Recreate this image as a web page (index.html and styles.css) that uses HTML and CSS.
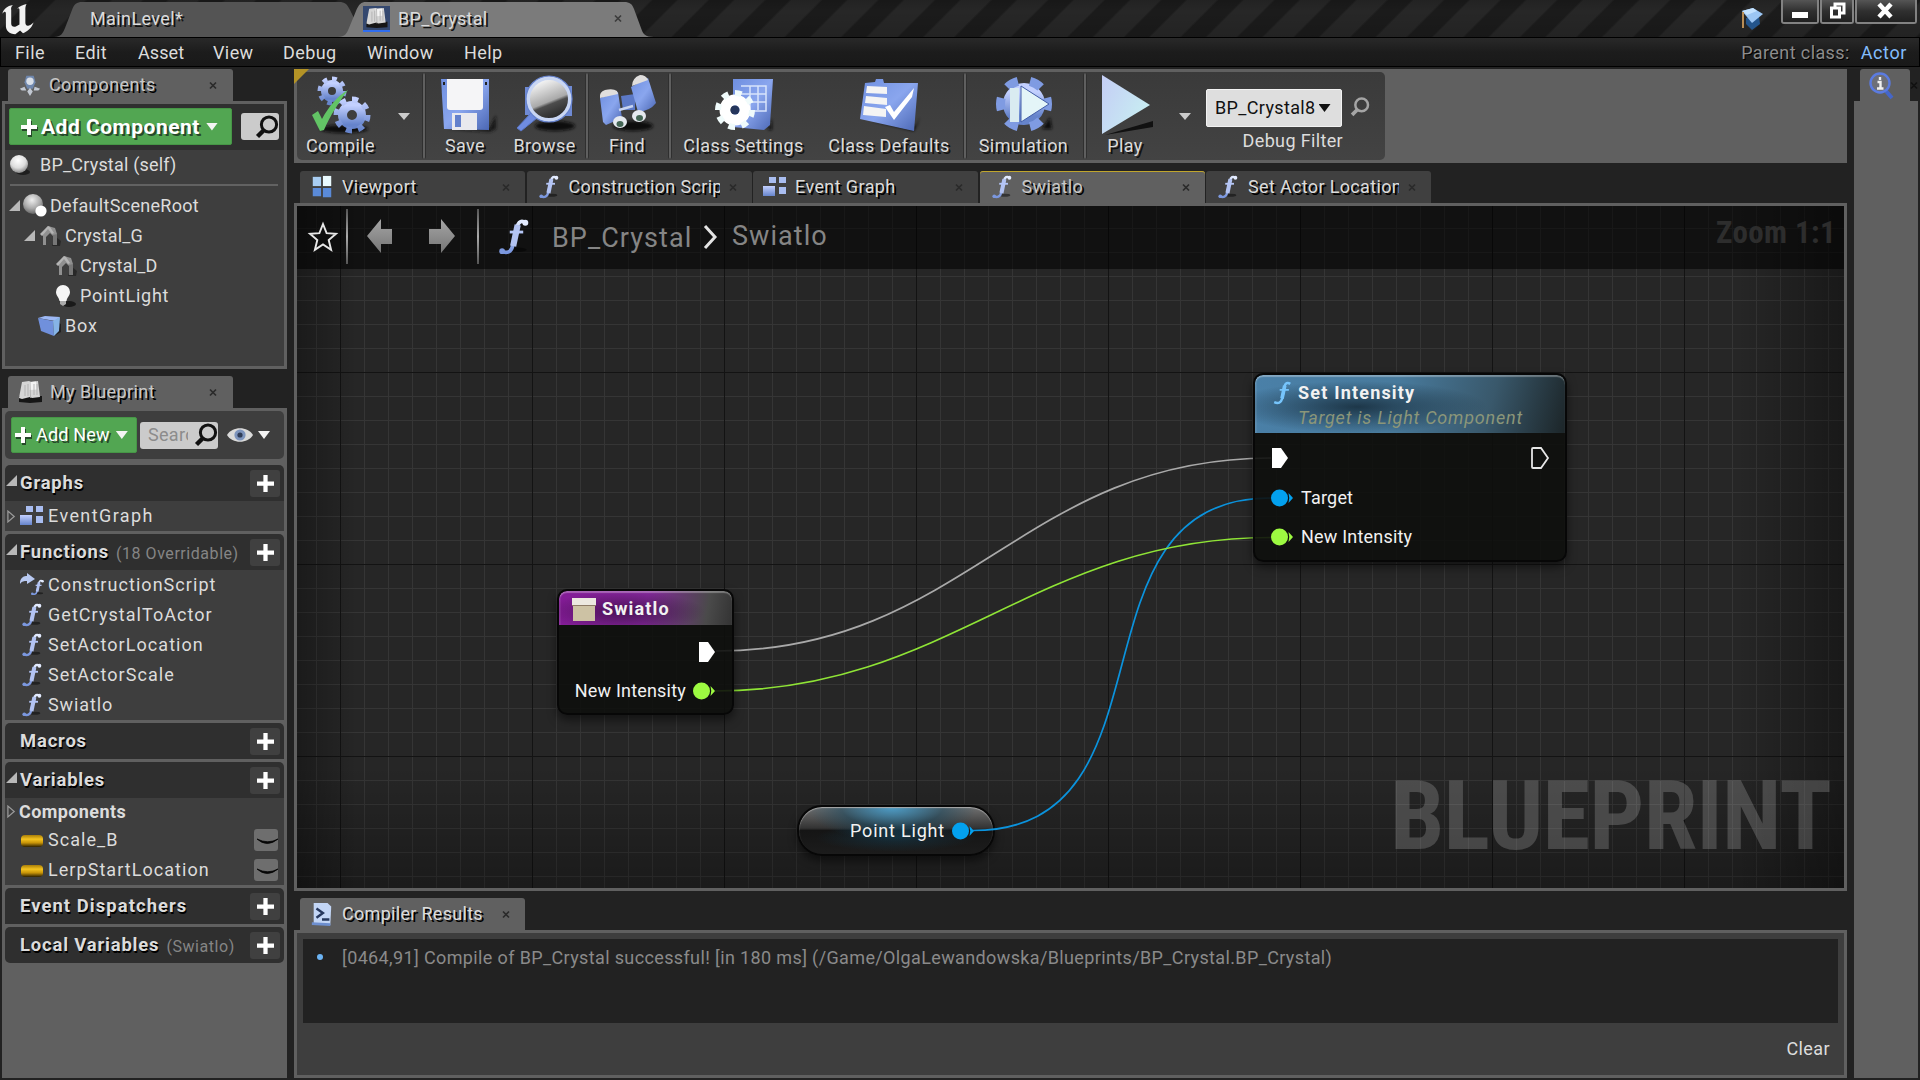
FILE: index.html
```html
<!DOCTYPE html>
<html lang="en">
<head>
<meta charset="utf-8">
<title>BP_Crystal</title>
<link rel="stylesheet" href="styles.css">
</head>
<body>
<svg class="sprite" aria-hidden="true">
  <defs>
    <linearGradient id="blue" x1="0" y1="0" x2="0" y2="1"><stop offset="0" stop-color="#c3d0ff"/><stop offset="1" stop-color="#6684cb"/></linearGradient>
    <linearGradient id="fgrad" x1="0" y1="0" x2="0" y2="1"><stop offset="0" stop-color="#e2ebff"/><stop offset="1" stop-color="#7895df"/></linearGradient>
    <linearGradient id="steel" x1="0" y1="0" x2="1" y2="1"><stop offset="0" stop-color="#6f8fe0"/><stop offset=".5" stop-color="#8aa6ee"/><stop offset="1" stop-color="#4b67b4"/></linearGradient>
    <linearGradient id="playg" x1="0" y1="0" x2="1" y2=".6"><stop offset="0" stop-color="#c4cdf5"/><stop offset="1" stop-color="#c8eef2"/></linearGradient>
    <linearGradient id="gray" x1="0" y1="0" x2="0" y2="1"><stop offset="0" stop-color="#a5a5a5"/><stop offset="1" stop-color="#757575"/></linearGradient>
    <linearGradient id="lens" x1=".3" y1="0" x2=".7" y2="1"><stop offset="0" stop-color="#fff"/><stop offset=".55" stop-color="#a9a9a9"/><stop offset=".62" stop-color="#4d4d4d"/><stop offset="1" stop-color="#222"/></linearGradient>
    <linearGradient id="pill" x1="0" y1="0" x2="0" y2="1"><stop offset="0" stop-color="#a87d08"/><stop offset=".35" stop-color="#f5c41f"/><stop offset=".65" stop-color="#c89408"/><stop offset="1" stop-color="#2c2000"/></linearGradient>
    <radialGradient id="ball" cx=".45" cy=".3" r=".7"><stop offset="0" stop-color="#fff"/><stop offset=".6" stop-color="#ddd"/><stop offset="1" stop-color="#888"/></radialGradient>
    <radialGradient id="ballgray" cx=".45" cy=".3" r=".7"><stop offset="0" stop-color="#eee"/><stop offset=".6" stop-color="#aaa"/><stop offset="1" stop-color="#666"/></radialGradient>
    <filter id="soft" x="-50%" y="-50%" width="200%" height="200%"><feGaussianBlur stdDeviation="1.4"/></filter>
  </defs>
  <symbol id="fn" viewBox="0 0 24 26">
    <ellipse cx="15" cy="22" rx="6" ry="1.6" fill="#000" opacity=".45"/>
    <path d="M20 3C17.500 1 15 2 14 6.500L11 19.500C10.200 23.500 7 25 3 23" fill="none" stroke="url(#fgrad)" stroke-width="2.600"/>
    <path d="M14.600 4.500L11.400 19.500" stroke="#b3c3f2" stroke-width="4.400"/>
    <circle cx="20" cy="3" r="2.100" fill="#e4ecff"/><circle cx="3.600" cy="23" r="2" fill="#7c98de"/>
    <path d="M9 9.500h9.500" stroke="#b5c6f6" stroke-width="2"/>
  </symbol>
  <symbol id="plus" viewBox="0 0 16 16"><path d="M6 0h4v6h6v4h-6v6H6v-6H0V6h6z" fill="#fff"/></symbol>
  <symbol id="search" viewBox="0 0 24 24"><circle cx="14" cy="9.500" r="7.600" fill="none" stroke="currentColor" stroke-width="3"/><path d="M9 15l-6.500 6.500" stroke="currentColor" stroke-width="4.400"/></symbol>
  <symbol id="close" viewBox="0 0 8 8"><path d="M1 1l6 6M7 1L1 7" stroke="currentColor" stroke-width="1.700"/></symbol>
  <symbol id="open" viewBox="0 0 12 12"><path d="M12 0v12H0z" fill="#b8b8b8"/></symbol>
  <symbol id="shut" viewBox="0 0 10 14"><path d="M1 1v12l7-6z" fill="none" stroke="#9a9a9a" stroke-width="1.400"/></symbol>
  <symbol id="grid4" viewBox="0 0 24 26"><path d="M2 2h9v10H2z" fill="#a8cdf2"/><path d="M13 1h9v11h-9z" fill="#eafaff"/><path d="M2 14h9v9H2zM13 14h9v10h-9z" fill="#5a8ad8"/></symbol>
  <symbol id="graph" viewBox="0 0 24 22"><path d="M6 1h7v6H6zM16 1h7v6h-7z" fill="#a9bdf0"/><path d="M0 10h12v10H0z" fill="url(#blue)"/><path d="M16 11h7v7h-7z" fill="#a9bdf0"/></symbol>
  <symbol id="book" viewBox="0 0 24 24">
    <path d="M1 22l11 1 12-1v-6H1z" fill="#161616"/>
    <path d="M4 2l7-1 2 1 7-1 2 16-8 1-2-1-8 2-3-1z" fill="#d6d6d6"/>
    <path d="M11 2l7-.500.500 8-7 .500z" fill="#f4f4f4"/>
    <path d="M12 2l.500 16M7 5v11M10 4v12M16 4v11M19 4v11" stroke="#aaa" fill="none" stroke-width=".8"/>
  </symbol>
  <symbol id="house" viewBox="0 0 22 22">
    <path d="M13 21h8l1-5-5-4z" fill="#1a1a1a" opacity=".6"/>
    <path d="M2 9L9 1l7 2 2 6v11h-4V11l-3-3-4 4v8H4V11z" fill="#909090"/>
    <path d="M1 9l8-8 2 1 4 6-2 1-4-5-6 7z" fill="#b4b4b4"/><path d="M14 10l4-1v11h-4z" fill="#777"/>
  </symbol>
</svg>

<header class="titlebar">
  <svg class="logo" viewBox="0 0 36 36"><path d="M2 14C3 9 6 6 11 5c-2 2-1.500 4-1.500 5v14c0 3 2 4 4 3l3-2V10c0-2-1-2-2-1 2-3 5-4 8-5-1 2-1 4-1 6v13c0 2 1 4 3 3 1 0 2-1 4-3-2 6-5 9-9 11l-2.500-3-4 4C8 35 4.500 31 5 25V14c0-2-1-3-3 0z" transform="translate(0 -1) scale(1.180 .980)" fill="#f2f2f2"/></svg>
  <div class="wintab wintab-main">
    <svg class="wintab-shape" viewBox="0 0 302 35" preserveAspectRatio="none"><path d="M0 35c7 0 9-4 11-9l7-18c2-6 5-8 10-8h257c6 0 8 2 11 8l6 12-10 15z" fill="#545454"/></svg>
    <span>MainLevel*</span>
  </div>
  <div class="wintab wintab-active">
    <svg class="wintab-shape" viewBox="0 0 316 35" preserveAspectRatio="none"><path d="M0 35c7 0 9-4 11-9l7-17c3-7 5-9 10-9h258c6 0 8 2 10 7l7 19c2 6 4 9 13 9z" fill="#7b7b7b"/></svg>
    <i class="book-box"><svg width="23" height="22"><use href="#book"/></svg></i>
    <span>BP_Crystal</span>
    <svg class="x"><use href="#close"/></svg>
  </div>
  <div class="winctl">
    <svg class="cap" viewBox="0 0 26 24"><path d="M7 11l13-2 1 8-8 6-6-6z" fill="#24558c"/><path d="M3 4L14 1l10 6-11 9z" fill="#9cc6f4"/><path d="M3 4L14 1l4 3-10 4z" fill="#c4e2ff"/><path d="M4 5v16" stroke="#b98d55" stroke-width="2"/></svg>
    <div class="winbtns">
      <b class="wb wb1"><svg width="16" height="20"><path d="M0 12h16v6H0z" fill="#fff"/></svg></b>
      <b class="wb wb2"><svg width="17" height="18"><path d="M6 5V2h9v9h-3M2.500 6h8v9h-8z" fill="none" stroke="#fff" stroke-width="3"/></svg></b>
      <b class="wb wb3"><svg width="16" height="16"><path d="M2 1l12 13M14 1L2 14" stroke="#fff" stroke-width="4.500"/></svg></b>
    </div>
  </div>
</header>

<nav class="menubar">
  <span class="m1">File</span><span class="m2">Edit</span><span class="m3">Asset</span><span class="m4">View</span><span class="m5">Debug</span><span class="m6">Window</span><span>Help</span>
  <span class="parent">Parent class:</span><span class="actor">Actor</span>
</nav>

<main class="work">
  <aside class="left">
    <div class="tab side-tab">
      <svg class="ic24" viewBox="0 0 24 26"><path d="M8 3h8l2 7-3 7H9L6 10z" fill="#6f87ad"/><circle cx="12" cy="9" r="4" fill="#d9dfe8"/><path d="M1 17l5-2 2 4H3zM17 15l6 2-2 2h-5zM9 20l3-4 3 4-3 5z" fill="#c2c8d2"/></svg>
      <span>Components</span><svg class="x"><use href="#close"/></svg>
    </div>
    <section class="panel components">
      <div class="addrow">
        <div class="green add-component"><svg width="16" height="16"><use href="#plus"/></svg><b>Add Component</b><i class="tri"></i></div>
        <div class="field"><svg width="24" height="24"><use href="#search"/></svg></div>
      </div>
      <div class="self"><svg width="22" height="22" viewBox="0 0 22 22"><ellipse cx="14" cy="18" rx="7" ry="3" fill="#111" opacity=".7"/><circle cx="10" cy="10" r="9" fill="url(#ball)"/></svg><span>BP_Crystal (self)</span></div>
      <hr>
      <div class="tree t0"><svg class="op"><use href="#open"/></svg><svg width="26" height="24" viewBox="0 0 26 24"><circle cx="11" cy="10" r="10" fill="url(#ballgray)"/><circle cx="19" cy="17" r="5.600" fill="#fff"/></svg><span>DefaultSceneRoot</span></div>
      <div class="tree t1"><svg class="op"><use href="#open"/></svg><svg width="22" height="22"><use href="#house"/></svg><span>Crystal_G</span></div>
      <div class="tree t2"><svg width="22" height="22"><use href="#house"/></svg><span>Crystal_D</span></div>
      <div class="tree t2"><svg width="22" height="24" viewBox="0 0 22 24"><ellipse cx="14" cy="20" rx="7" ry="3" fill="#1a1a1a"/><path d="M1 8a7 7 0 0 1 14 0c0 4-3 5-3.500 9h-7C4 13 1 12 1 8z" fill="#f6f6f6"/><path d="M5 17h6v3l-3 2-3-2z" fill="#aaa"/></svg><span>PointLight</span></div>
      <div class="tree t3"><svg width="24" height="24" viewBox="0 0 24 24"><path d="M16 22l7-4v-8l-4-2z" fill="#1a1a1a" opacity=".8"/><path d="M0 4l7-2 15 1-5 4z" fill="#9db8f5"/><path d="M0 4l15 3 1 15-13-5z" fill="#7090dc"/><path d="M15 7l7-4-1 14-5 5z" fill="#86b4e6"/></svg><span>Box</span></div>
    </section>

    <div class="tab side-tab second">
      <svg class="ic24"><use href="#book"/></svg>
      <span>My Blueprint</span><svg class="x"><use href="#close"/></svg>
    </div>
    <section class="panel blueprint">
      <div class="bp-tools">
        <div class="green add-new"><svg width="16" height="16"><use href="#plus"/></svg><span>Add New</span><i class="tri"></i></div>
        <div class="field wide"><span>Search</span><svg width="24" height="24"><use href="#search"/></svg></div>
        <svg class="eye" viewBox="0 0 26 16"><path d="M0 8C5-1 21-1 26 8c-5 9-21 9-26 0z" fill="#dadada"/><circle cx="13" cy="8" r="5.600" fill="#7d94bd"/><circle cx="13" cy="8" r="2.600" fill="#2f3c57"/></svg>
        <i class="tri"></i>
      </div>
      <div class="cat first"><svg class="op"><use href="#open"/></svg><b>Graphs</b><i class="plusbtn"><svg width="17" height="17"><use href="#plus"/></svg></i></div>
      <div class="item"><svg class="sh"><use href="#shut"/></svg><svg class="gi"><use href="#graph"/></svg><span class="s14">EventGraph</span></div>
      <div class="cat"><svg class="op"><use href="#open"/></svg><b>Functions</b><small>(18 Overridable)</small><i class="plusbtn"><svg width="17" height="17"><use href="#plus"/></svg></i></div>
      <div class="item"><svg class="sh"></svg><svg class="gi" viewBox="0 0 24 24"><path d="M0 9c1-5 4-6 7-6V0l8 6-8 5V8C4 8 2 8 0 11z" fill="#b9caf2"/><use href="#fn" x="10" y="5" width="15" height="19"/></svg><span>ConstructionScript</span></div>
      <div class="item"><svg class="sh"></svg><svg class="gi"><use href="#fn"/></svg><span>GetCrystalToActor</span></div>
      <div class="item"><svg class="sh"></svg><svg class="gi"><use href="#fn"/></svg><span>SetActorLocation</span></div>
      <div class="item"><svg class="sh"></svg><svg class="gi"><use href="#fn"/></svg><span>SetActorScale</span></div>
      <div class="item"><svg class="sh"></svg><svg class="gi"><use href="#fn"/></svg><span class="s08">Swiatlo</span></div>
      <div class="cat"><svg class="op"></svg><b>Macros</b><i class="plusbtn"><svg width="17" height="17"><use href="#plus"/></svg></i></div>
      <div class="cat"><svg class="op"><use href="#open"/></svg><b>Variables</b><i class="plusbtn"><svg width="17" height="17"><use href="#plus"/></svg></i></div>
      <div class="item sub"><svg class="sh"><use href="#shut"/></svg><b>Components</b></div>
      <div class="item"><svg class="sh"></svg><svg class="gi" viewBox="0 0 24 24"><rect x="1" y="7" width="22" height="12" rx="4" fill="url(#pill)"/></svg><span>Scale_B</span><i class="lid"><svg viewBox="0 0 24 22" width="24" height="22"><path d="M3 10q10 9 21 0-10 5.500-21 0z" fill="#050505" stroke="#050505" stroke-width=".8"/></svg></i></div>
      <div class="item"><svg class="sh"></svg><svg class="gi" viewBox="0 0 24 24"><rect x="1" y="7" width="22" height="12" rx="4" fill="url(#pill)"/></svg><span>LerpStartLocation</span><i class="lid"><svg viewBox="0 0 24 22" width="24" height="22"><path d="M3 10q10 9 21 0-10 5.500-21 0z" fill="#050505" stroke="#050505" stroke-width=".8"/></svg></i></div>
      <div class="cat"><svg class="op"></svg><b class="disp">Event Dispatchers</b><i class="plusbtn"><svg width="17" height="17"><use href="#plus"/></svg></i></div>
      <div class="cat last"><svg class="op"></svg><b>Local Variables</b><small>(Swiatlo)</small><i class="plusbtn"><svg width="17" height="17"><use href="#plus"/></svg></i></div>
    </section>
  </aside>

  <section class="center">
    <div class="toolbar">
      <i class="corner"></i>
      <div class="tools">
        <div class="tool w87"><svg class="ti" viewBox="0 0 60 60">
          <ellipse cx="34" cy="55" rx="24" ry="4" fill="#111" filter="url(#soft)"/>
          <g fill="none" stroke="url(#blue)"><circle cx="22" cy="17" r="7.500" stroke-width="7"/><circle cx="22" cy="17" r="12" stroke-width="5" pathLength="16" stroke-dasharray="1 1"/><circle cx="42" cy="41" r="9.500" stroke-width="9"/><circle cx="42" cy="41" r="15.500" stroke-width="6" pathLength="16" stroke-dasharray="1 1"/></g>
          <path d="M2 41l6-4 4 8C18 34 27 22 38 16 29 28 20 42 14 56l-4 1z" fill="#62c465"/></svg><span>Compile</span></div>
        <i class="drop"></i>
        <i class="sep s1"></i>
        <div class="tool w78"><svg class="ti" viewBox="0 0 60 60">
          <path d="M12 55h42l7-14v14l-6 3z" fill="#161616" filter="url(#soft)"/><path d="M6 5h48v51l-45-1z" fill="url(#steel)"/><path d="M12 5h36v28q0 3-3 3H15q-3 0-3-3z" fill="#f5f5f7"/><path d="M17 39h25v17H17z" fill="#e9e9ee"/><path d="M20 41h6v12h-6z" fill="#6380cc"/><path d="M8 8h2v3H8zM50 8h2v3h-2z" fill="#222"/></svg><span>Save</span></div>
        <div class="tool w81"><svg class="ti" viewBox="0 0 60 60">
          <ellipse cx="40" cy="52" rx="20" ry="5" fill="#111" filter="url(#soft)"/><path d="M10 13h12v28H10zM44 12h13v30H44z" fill="#6f8ad4"/><path d="M16 39L2 54l4 3 16-13z" fill="#6f8ce0" stroke="#5b78c8"/><circle cx="34" cy="25" r="21" fill="url(#lens)" stroke="#c9d6f3" stroke-width="4"/><circle cx="34" cy="25" r="23" fill="none" stroke="#6683cf" stroke-width="1.200"/></svg><span>Browse</span></div>
        <i class="sep s2"></i>
        <div class="tool w76"><svg class="ti" viewBox="0 0 60 60">
          <ellipse cx="36" cy="52" rx="20" ry="5" fill="#111" filter="url(#soft)"/><path d="M24 22l14-2v16H26z" fill="#5c79c6"/><path d="M3 24l18-6 4 26-16 7-3-3z" fill="url(#steel)"/><path d="M34 13l17-9 8 25q-6 8-18 9z" fill="url(#steel)"/><path d="M3 24q-1-6 5-8 8-2 12 1l1 3zM35 12q0-8 8-11 6 0 8 5z" fill="#e0dedd"/><ellipse cx="23" cy="48" rx="7" ry="6" fill="#e5e9ef"/><ellipse cx="23" cy="50" rx="3.500" ry="3" fill="#465"/><ellipse cx="42" cy="42" rx="7" ry="6" fill="#e5e9ef"/><ellipse cx="42.500" cy="44" rx="3.500" ry="3" fill="#465"/><path d="M22 36l14-4" stroke="#c8d4f0" stroke-width="2.500"/></svg><span>Find</span></div>
        <i class="sep s3"></i>
        <div class="tool w143"><svg class="ti" viewBox="0 0 60 60">
          <path d="M18 56h36l4-12v12z" fill="#111" filter="url(#soft)"/><path d="M19 5h40l-3 46-6 5-31-3z" fill="url(#steel)"/><path d="M27 12h25v25H27M27 20h25M27 28h25M36 12v24M44 12v24" fill="none" stroke="#d7e4fb" stroke-width="1.500"/><circle cx="21" cy="36" r="10" fill="none" stroke="#fff" stroke-width="11"/><circle cx="21" cy="36" r="17" fill="none" stroke="#f0fbfb" stroke-width="6" pathLength="16" stroke-dasharray="1 1"/><circle cx="21" cy="36" r="4.500" fill="#25365c"/></svg><span>Class Settings</span></div>
        <div class="tool w148"><svg class="ti" viewBox="0 0 60 60">
          <path d="M10 46l48 6 3-10-6 15z" fill="#111" filter="url(#soft)"/><path d="M6 9l10-1 1-3h7l1 4h34l-4 48L1 45z" fill="url(#steel)"/><path d="M8 12l20 1v7L7 19zM7 22l21 2v7L6 29zM5 32l22 3v8L4 41z" fill="#f4f4f4"/><path d="M26 33l5-2 4 7 20-24-2 9-18 23z" fill="#fff"/></svg><span>Class Defaults</span></div>
        <i class="sep s4"></i>
        <div class="tool w113"><svg class="ti" viewBox="0 0 60 60">
          <path d="M12 55h36l8-12 2 12z" fill="#111" filter="url(#soft)"/><circle cx="30" cy="30" r="12" fill="none" stroke="url(#blue)" stroke-width="18"/><circle cx="30" cy="30" r="23.500" fill="none" stroke="#7f9be2" stroke-width="9" pathLength="12" stroke-dasharray="1 1" transform="rotate(-15 30 30)"/><path d="M16 14h9v34h-9z" fill="#d9ebf1"/><path d="M27 12v36l28-18z" fill="#e4f5f8" stroke="#435da6"/></svg><span>Simulation</span></div>
        <i class="sep s5"></i>
        <div class="tool w76 play"><svg class="ti" viewBox="0 0 60 60"><path d="M7 61l48-14v6z" fill="#111"/><path d="M4 1l48 30L4 60z" fill="url(#playg)"/></svg><span>Play</span></div>
        <i class="drop d2"></i>
        <div class="debug"><div class="select"><span>BP_Crystal8</span><i class="tri"></i></div><span class="dlabel">Debug Filter</span></div>
        <svg class="dsearch"><use href="#search"/></svg>
      </div>
    </div>

    <div class="doctabs">
      <div class="tab"><svg class="ic24"><use href="#grid4"/></svg><span>Viewport</span><svg class="x"><use href="#close"/></svg></div>
      <div class="tab"><svg class="ic24"><use href="#fn"/></svg><span class="long">Construction Script</span><svg class="x"><use href="#close"/></svg></div>
      <div class="tab"><svg class="ic24"><use href="#graph"/></svg><span>Event Graph</span><svg class="x"><use href="#close"/></svg></div>
      <div class="tab current"><svg class="ic24"><use href="#fn"/></svg><span>Swiatlo</span><svg class="x"><use href="#close"/></svg></div>
      <div class="tab"><svg class="ic24"><use href="#fn"/></svg><span class="long">Set Actor Location</span><svg class="x"><use href="#close"/></svg></div>
    </div>

    <div class="graph">
      <div class="node n-point"><span>Point Light</span><svg class="pin azure" viewBox="0 0 23 18"><circle cx="8.500" cy="9" r="8.500"/><path d="M17.500 4l4.500 5-4.500 5q1.500-5 0-10z"/></svg></div>
      <svg class="wires" viewBox="297 206 1547 682">
        <g fill="none" stroke-width="1.700">
          <path d="M716 651C965 651 1022 458 1271 458" stroke="#a9a9a9"/>
          <path d="M973 830.500C1183 830.500 1061 498 1271 498" stroke="#0b93dd"/>
          <path d="M714 691C950 691 1035 537.500 1271 537.500" stroke="#8fe436"/>
        </g>
      </svg>
      <div class="watermark">BLUEPRINT</div>
      <div class="crumbs">
        <svg width="30" height="32" viewBox="0 0 30 32"><path d="M15 3l3.600 9.200 9.400.600-7.300 6.300 2.400 9.700-8.100-5.400-8.100 5.400 2.400-9.700L2 12.800l9.400-.600z" fill="none" stroke="#e8e8e8" stroke-width="1.900"/></svg>
        <i class="vbar b1"></i>
        <svg class="nav1" width="26" height="36" viewBox="0 0 26 36"><path d="M0 17L14 0v10h11v15H14v9z" fill="url(#gray)"/></svg>
        <svg class="nav2" width="26" height="36" viewBox="0 0 26 36"><path d="M26 17L12 0v10H0v15h12v9z" fill="url(#gray)"/></svg>
        <i class="vbar b2"></i>
        <svg class="bigf"><use href="#fn"/></svg>
        <span class="c1">BP_Crystal</span>
        <svg width="16" height="26" viewBox="0 0 16 26"><path d="M2 2l10 11L2 24" fill="none" stroke="#e4e4e4" stroke-width="3"/></svg>
        <span class="c2">Swiatlo</span>
        <b class="zoom">Zoom 1:1</b>
      </div>

      <div class="node n-swiatlo">
        <div class="nhead"><svg width="24" height="24" viewBox="0 0 24 24"><path d="M0 1h24v8H0z" fill="#ece8e0"/><path d="M1 9h22v15H1z" fill="#cdc2a4"/><path d="M0 8.500h24" stroke="#8d7b66"/></svg><b>Swiatlo</b></div>
        <div class="nrow right r-exec"><svg class="exec" viewBox="0 0 18 22"><path d="M1 1h9l7 10-7 10H1z" fill="#fff"/></svg></div>
        <div class="nrow right r-int"><span>New Intensity</span><svg class="pin lime" viewBox="0 0 23 18"><circle cx="8.500" cy="9" r="8.500"/><path d="M17.500 4l4.500 5-4.500 5q1.500-5 0-10z"/></svg></div>
      </div>

      <div class="node n-set">
        <div class="nhead"><svg class="nf" viewBox="0 0 24 26"><path d="M21 3C18 1 15.500 2 14.600 6.500L12 19.500C11 23.500 8 25 3.500 23" fill="none" stroke="#76c4fb" stroke-width="2.800"/><path d="M15 5l-3 14" stroke="#76c4fb" stroke-width="4"/><path d="M9.500 9.500h10" stroke="#76c4fb" stroke-width="2"/></svg><div class="nt"><b>Set Intensity</b><em>Target is Light Component</em></div></div>
        <div class="nrow r-exec"><svg class="exec" viewBox="0 0 18 22"><path d="M1 1h9l7 10-7 10H1z" fill="#fff"/></svg><svg class="exec" viewBox="0 0 18 22"><path d="M1 2q0-1 1-1h8l7 10-7 10H2q-1 0-1-1z" fill="none" stroke="#e6e6e6" stroke-width="1.800"/></svg></div>
        <div class="nrow r-target"><svg class="pin azure" viewBox="0 0 23 18"><circle cx="8.500" cy="9" r="8.500"/><path d="M17.500 4l4.500 5-4.500 5q1.500-5 0-10z"/></svg><span>Target</span></div>
        <div class="nrow r-last"><svg class="pin lime" viewBox="0 0 23 18"><circle cx="8.500" cy="9" r="8.500"/><path d="M17.500 4l4.500 5-4.500 5q1.500-5 0-10z"/></svg><span>New Intensity</span></div>
      </div>
    </div>

    <div class="tab result-tab"><svg class="ic24" viewBox="0 0 24 26"><path d="M3 1h15l4 4-1 20-18-1z" fill="#c3d6f6"/><path d="M1 22l20 1v3L1 25z" fill="#6d8fd0"/><path d="M6 7l7 5-7 5M12 19h8" fill="none" stroke="#26385e" stroke-width="2.600"/></svg><span>Compiler Results</span><svg class="x"><use href="#close"/></svg></div>
    <div class="results">
      <div class="log"><i class="dot"></i><span>[0464,91] Compile of BP_Crystal successful! [in 180 ms] (/Game/OlgaLewandowska/Blueprints/BP_Crystal.BP_Crystal)</span></div>
      <div class="clear">Clear</div>
    </div>
  </section>

  <aside class="rightbar">
    <div class="rtab"><i><svg width="26" height="30" viewBox="0 0 26 30"><path d="M17 20l6 7" stroke="#4566c8" stroke-width="4"/><circle cx="11" cy="12" r="9.500" fill="#6d6f78" stroke="#5b7be0" stroke-width="2.400"/><path d="M11 6v3M8.500 11h3v6M8 17.500h6.500" stroke="#f0f0f0" stroke-width="2.400" fill="none"/></svg></i><svg class="x"><use href="#close"/></svg></div>
    <div class="rbody"></div>
  </aside>
</main>
</body>
</html>
```
FILE: styles.css
```css
* { box-sizing: border-box; }
body {
  margin: 0;
  width: 1920px;
  height: 1080px;
  overflow: hidden;
  display: flex;
  flex-direction: column;
  background: #222;
  color: #dcdcdc;
  font: 18px/22px Roboto, "Liberation Sans", sans-serif;
  letter-spacing: .4px;
  white-space: nowrap;
}
svg { display: block; flex: none; overflow: visible; }
.sprite { position: absolute; width: 0; height: 0; }
i { font-style: normal; flex: none; }

/* Title bar */
.titlebar {
  height: 37px;
  flex: none;
  display: flex;
  align-items: flex-end;
  background:
    linear-gradient(rgba(0,0,0,.12), rgba(0,0,0,0) 30%, rgba(0,0,0,.1)),
    repeating-linear-gradient(135deg, #272727 0 20px, #1b1b1b 22px 38px, #272727 40px);
}
.logo { width: 36px; height: 36px; margin-right: 18px; }
.wintab { position: relative; height: 35px; display: flex; align-items: center; padding-bottom: 2px; text-shadow: 2px 2px 0 #111; }
.wintab > * { position: relative; }
.wintab > .wintab-shape { position: absolute; left: 0; top: 0; width: 100%; height: 100%; }
.wintab-main { width: 302px; padding-left: 36px; }
.wintab-active { width: 316px; margin-left: -18px; padding-left: 25px; letter-spacing: .3px; }
.book-box { width: 27px; height: 26px; padding: 1px 2px 0; margin: 1px 8px 0 0; background: #34486f; border-bottom: 2px solid #2f6df0; }
.x { width: 8px; height: 9px; color: #3c3c3c; margin-left: auto; }
.wintab-active .x { margin-right: 32px; }
.winctl { margin-left: auto; height: 37px; display: flex; align-items: flex-start; padding-right: 3px; }
.cap { width: 26px; height: 24px; margin: 7px 16px 0 0; }
.winbtns { display: flex; gap: 1px; }
.wb { height: 24px; border: 2px solid #828282; border-top: 0; border-radius: 0 0 3px 3px; background: linear-gradient(#555, #303030 50%, #202020); display: flex; justify-content: center; }
.wb1 { width: 38px; }
.wb2 { width: 34px; padding-top: 2px; }
.wb3 { width: 62px; padding: 3px 2px 0 0; }

/* Menu bar */
.menubar {
  height: 30px;
  flex: none;
  display: flex;
  align-items: center;
  padding: 2px 14px 0 14px;
  border: 1px solid #000;
  background: linear-gradient(#292929, #1c1c1c 50%, #191919);
}
.m1 { width: 60px; }
.m2 { width: 63px; }
.m3 { width: 75px; letter-spacing: .1px; }
.m4 { width: 70px; }
.m5 { width: 84px; }
.m6 { width: 97px; }
.parent { margin-left: auto; color: #8c8c8c; text-shadow: 1px 1px 0 #000; }
.actor { margin-left: 11px; margin-right: -2px; color: #83bdfd; letter-spacing: .6px; }

/* Work area */
.work { flex: 1; display: flex; padding-top: 2px; min-height: 0; }
.tab {
  height: 32px;
  width: 225px;
  flex: none;
  display: flex;
  align-items: center;
  padding: 0 15px 0 10px;
  background: #404040;
  border-radius: 3px 3px 0 0;
  text-shadow: 2px 2px 0 #000;
}
.tab .x { color: #2a2a2a; }
.ic24 { width: 24px; height: 24px; margin-right: 8px; }

/* Left column */
.left { width: 285px; margin-left: 2px; display: flex; flex-direction: column; }
.side-tab { margin-left: 6px; background: #606060; color: #c8c8c8; }
.side-tab span { margin-left: -1px; }
.side-tab.second span { margin-left: 0; }
.side-tab.second { margin-top: 7px; }
.side-tab .x { margin-right: 1px; }
.panel { border: 3px solid #606060; background: #606060; display: flex; flex-direction: column; }
.components { height: 268px; flex: none; background: #3e3e3e; }
.addrow { height: 46px; display: flex; align-items: flex-start; padding: 4px 0 0 4px; background: #2f2f2f; }
.green { display: flex; align-items: center; background: #52a652; color: #fff; border: 1px solid #469646; border-radius: 2px; text-shadow: 2px 2px 0 #26492a; }
.green svg { filter: drop-shadow(1px 2px 0 #26492a); }
.add-component { width: 223px; height: 37px; padding-left: 11px; font-size: 21px; letter-spacing: .5px; }
.add-component b { margin-left: 4px; }
.tri { width: 12px; height: 8px; background: #f4f4f4; clip-path: polygon(0 0, 100% 0, 50% 100%); }
.add-component .tri { margin-left: 6px; }
.field { display: flex; align-items: center; justify-content: flex-end; width: 38px; height: 27px; background: #cbcbcb; border-radius: 3px; color: #111; }
.addrow .field { margin: 5px 0 0 9px; }
.self { height: 30px; display: flex; align-items: center; padding-left: 4px; gap: 9px; letter-spacing: .2px; }
hr { width: 268px; height: 2px; margin: 4px 0 5px 5px; border: 0; background: #626262; flex: none; }
.tree { height: 30px; display: flex; align-items: center; gap: 3px; padding-bottom: 1px; }
.tree .op, .cat .op { width: 11px; height: 11px; }
.t0 { padding-left: 4px; gap: 2px; letter-spacing: .3px; }
.t1 { padding-left: 19px; gap: 4px; letter-spacing: .2px; }
.t2 { padding-left: 50px; letter-spacing: .2px; }
.t2 + .t2 { letter-spacing: .75px; }
.t3 { padding-left: 33px; letter-spacing: .8px; }

.blueprint { flex: 1; margin-bottom: 2px; }
.bp-tools { height: 48px; flex: none; display: flex; align-items: center; padding-left: 6px; background: #3e3e3e; border-radius: 5px; }
.add-new { width: 126px; height: 36px; padding-left: 3px; letter-spacing: .2px; }
.add-new span { margin: 0 6px 0 5px; }
.wide { width: 78px; margin-left: 3px; color: #8c8c8c; }
.wide span { width: 40px; overflow: hidden; margin-right: 6px; letter-spacing: .3px; }
.wide svg { color: #111; }
.eye { width: 26px; height: 16px; margin: 0 5px 0 9px; }
.cat { height: 36px; flex: none; margin-top: 3px; display: flex; align-items: center; padding: 0 4px 0 1px; background: #2f2f2f; letter-spacing: .85px; border-radius: 5px 5px 0 0; text-shadow: 1px 2px 0 #000; }
.cat b { font-size: 18.4px; }
.cat.first { margin-top: 6px; }
.cat.last { border-radius: 5px; }
.cat .op { margin: -6px 3px 0 0; }
.cat .disp { letter-spacing: 1.08px; }
.cat small { font-size: 16px; letter-spacing: .55px; color: #858585; margin: 4px 0 0 7px; text-shadow: none; }
.plusbtn { width: 30px; height: 27px; margin-left: auto; display: flex; align-items: center; justify-content: center; background: #404040; border-radius: 3px; }
.item { height: 30px; flex: none; display: flex; align-items: center; padding: 0 6px 0 2px; background: #3e3e3e; letter-spacing: 1.05px; }
.sh { width: 9px; height: 13px; margin-right: 4px; }
.gi { width: 24px; height: 24px; margin-right: 4px; }
.s14 { letter-spacing: 1.4px; }
.s08 { letter-spacing: .9px; }
.sub { height: 27px; letter-spacing: .4px; }
.sub .sh { margin-right: 3px; }
.lid { width: 24px; height: 22px; margin-left: auto; background: #6e6e6e; border-radius: 3px; }

/* Centre column */
.center { width: 1553px; margin-left: 7px; display: flex; flex-direction: column; }
.toolbar { position: relative; height: 94px; flex: none; background: #606060; padding: 3px; }
.corner { position: absolute; left: 0; top: 0; width: 15px; height: 15px; background: #b49326; clip-path: polygon(0 0, 100% 0, 0 100%); }
.tools { width: 1088px; height: 88px; display: flex; background: linear-gradient(#3a3a3a, #434343); border-radius: 5px; text-shadow: 2px 2px 0 #111; }
.tool { display: flex; flex-direction: column; align-items: center; padding-top: 2px; }
.tool span { margin-top: 1px; }
.ti { width: 60px; height: 60px; }
.w87 { width: 87px; } .w78 { width: 78px; } .w81 { width: 81px; } .w76 { width: 76px; }
.w143 { width: 143px; } .w148 { width: 148px; } .w113 { width: 113px; }
.w87 .ti { margin-left: -1px; }
.drop { width: 12px; height: 7px; margin: 41px 0 0 14px; background: #ccc; clip-path: polygon(0 0, 100% 0, 50% 100%); }
.d2 { margin-left: 16px; }
.sep { width: 4px; height: 86px; margin-top: 1px; background: #5f5f5f; border: 1px solid #2f2f2f; border-width: 0 1px; border-radius: 2px; }
.s1 { margin-left: 12px; }
.s3 { margin-left: 3px; }
.s5 { margin-left: 3px; }
.play .ti { margin-left: 6px; }
.debug { width: 136px; margin: 17px 8px 0 15px; display: flex; flex-direction: column; align-items: flex-end; text-shadow: none; letter-spacing: .35px; }
.select { width: 136px; height: 38px; background: #dedede; border: 1px solid #f2f2f2; color: #111; display: flex; align-items: center; padding-left: 8px; border-radius: 2px; }
.select .tri { background: #111; margin-left: 3px; }
.dlabel { margin: 3px -1px 0 0; }
.dsearch { width: 20px; height: 20px; margin-top: 25px; color: #a5a5a5; }

.doctabs { display: flex; gap: 1.5px; margin: 8px 0 0 6px; }
.doctabs .long { width: 151px; overflow: hidden; letter-spacing: .34px; }
.doctabs .current { background: #606060; box-shadow: inset 0 1px 0 #c0a52c; color: #c8c8c8; }

/* Graph canvas */
.graph {
  position: relative;
  height: 688px;
  flex: none;
  border: 3px solid #606060;
  overflow: hidden;
  background:
    linear-gradient(90deg, rgba(0,0,0,.3), transparent 60px, transparent 1440px, rgba(0,0,0,.35)),
    linear-gradient(transparent 560px, rgba(0,0,0,.3)),
    linear-gradient(90deg, #131313 1px, transparent 1px) 43px 0 / 192px 192px,
    linear-gradient(#131313 1px, transparent 1px) 0 166px / 192px 192px,
    linear-gradient(90deg, #353535 1px, transparent 1px) 19px 0 / 24px 24px,
    linear-gradient(#353535 1px, transparent 1px) 0 22px / 24px 24px,
    #262626;
}
.wires { position: absolute; left: 0; top: 0; width: 1547px; height: 682px; }
.watermark {
  position: absolute;
  right: 13px;
  bottom: 3px;
  font: 700 97px/138px "Roboto Condensed", Roboto, sans-serif;
  font-stretch: condensed;
  letter-spacing: -.8px;
  color: rgba(255,255,255,.18);
}
.crumbs { position: relative; height: 63px; display: flex; align-items: center; padding: 0 0 2px 11px; background: rgba(0,0,0,.55); font-size: 27px; letter-spacing: 1.05px; color: #858585; }
.vbar { width: 2px; height: 55px; background: linear-gradient(#555, #aaa 50%, #555); }
.b1 { margin: 0 19px 0 8px; }
.nav2 { margin-left: 36px; }
.b2 { margin: 0 18px 0 22px; }
.bigf { width: 34px; height: 38px; margin-right: 21px; }
.c1 { width: 151px; padding-top: 2px; }
.c2 { margin-left: 13px; padding-bottom: 2px; }
.zoom { margin-left: auto; padding: 0 8px 8px 0; font-family: "Roboto Condensed", Roboto, sans-serif; font-stretch: condensed; font-size: 31px; letter-spacing: .4px; color: #2d2d2d; }

.node { position: absolute; border: 2px solid #070707; border-radius: 10px; background: rgba(14,16,13,.9); box-shadow: 0 5px 10px rgba(0,0,0,.5); color: #f2f2f2; overflow: hidden; letter-spacing: .2px; }
.nhead { display: flex; box-shadow: inset 0 2px 1px rgba(255,255,255,.3), inset 2px 0 1px rgba(255,255,255,.08); border-radius: 8px 8px 0 0; }
.nrow { display: flex; align-items: center; height: 40px; }
.nrow.right { justify-content: flex-end; }
.exec { width: 18px; height: 22px; }
.pin { width: 23px; height: 18px; }
.lime { fill: #9dfa41; }
.azure { fill: #03a1ef; }

.n-swiatlo { left: 260px; top: 383px; width: 177px; height: 126px; }
.n-swiatlo .nhead { height: 34px; align-items: center; padding: 1px 0 0 13px; gap: 6px; letter-spacing: 1.15px; background: radial-gradient(ellipse 80px 20px at 38% 60%, rgba(35,5,40,.6), transparent), linear-gradient(100deg, #831b96 0, #83289a 50%, #4a4a4a 85%, #333); }
.n-swiatlo .r-exec { padding: 7px 16px 0 0; height: 46px; }
.n-swiatlo .r-int { gap: 7px; padding-right: 16px; }

.n-set { left: 956px; top: 167px; width: 314px; height: 189px; }
.n-set .nhead { height: 58px; padding: 7px 0 0 16px; gap: 5px; background: radial-gradient(ellipse 130px 26px at 33% 55%, rgba(15,32,44,.75), transparent), linear-gradient(105deg, #4a80a8 0, #487a9c 45%, #39586b 75%, #1c2528); }
.nf { width: 22px; height: 24px; margin-top: -1px; }
.nt { display: flex; flex-direction: column; letter-spacing: 1.2px; }
.nt em { letter-spacing: .78px; color: #8b9679; margin-top: 3px; }
.n-set .nrow { padding-left: 16px; gap: 7px; }
.n-set .r-exec { justify-content: space-between; padding: 8px 16px 0 16px; height: 42px; }
.n-set .r-target { margin-top: 3px; }
.n-set .r-last { margin-top: -1px; }

.n-point { left: 500px; top: 599px; width: 198px; height: 51px; border-radius: 25px; display: flex; align-items: center; justify-content: flex-end; gap: 7px; padding-right: 18px; letter-spacing: .8px; background: radial-gradient(ellipse 85px 34px at 48% 0, rgba(75,160,205,.95), rgba(20,70,95,.5) 60%, transparent), radial-gradient(ellipse 80px 14px at 50% 65%, rgba(20,60,80,.6), transparent), linear-gradient(#717171, #333 45%, #151515 50%, #1c1c1c); box-shadow: 0 5px 8px rgba(0,0,0,.5), inset 0 1px 1px #aaa; }

/* Compiler output */
.result-tab { margin: 7px 0 0 6px; background: #606060; }
.result-tab span { letter-spacing: .3px; }
.results { flex: 1; margin-bottom: 2px; border: 3px solid #606060; background: #3e3e3e; padding: 6px; display: flex; flex-direction: column; }
.log { height: 84px; flex: none; background: #222; color: #8a8a8a; display: flex; padding: 8px 0 0 14px; letter-spacing: .37px; }
.dot { width: 6px; height: 6px; border-radius: 3px; background: #6cb4f4; margin: 7px 19px 0 0; }
.clear { align-self: flex-end; margin: 15px 8px 0 0; }

/* Collapsed details column */
.rightbar { width: 64px; margin-left: 7px; display: flex; flex-direction: column; padding-bottom: 2px; }
.rtab { display: flex; align-items: center; padding-left: 6px; height: 32px; }
.rtab i { width: 50px; height: 32px; background: #606060; border-radius: 3px 3px 0 0; padding: 2px 0 0 9px; }
.rtab .x { margin: 0; color: #111; }
.rbody { flex: 1; background: #606060; }
```
